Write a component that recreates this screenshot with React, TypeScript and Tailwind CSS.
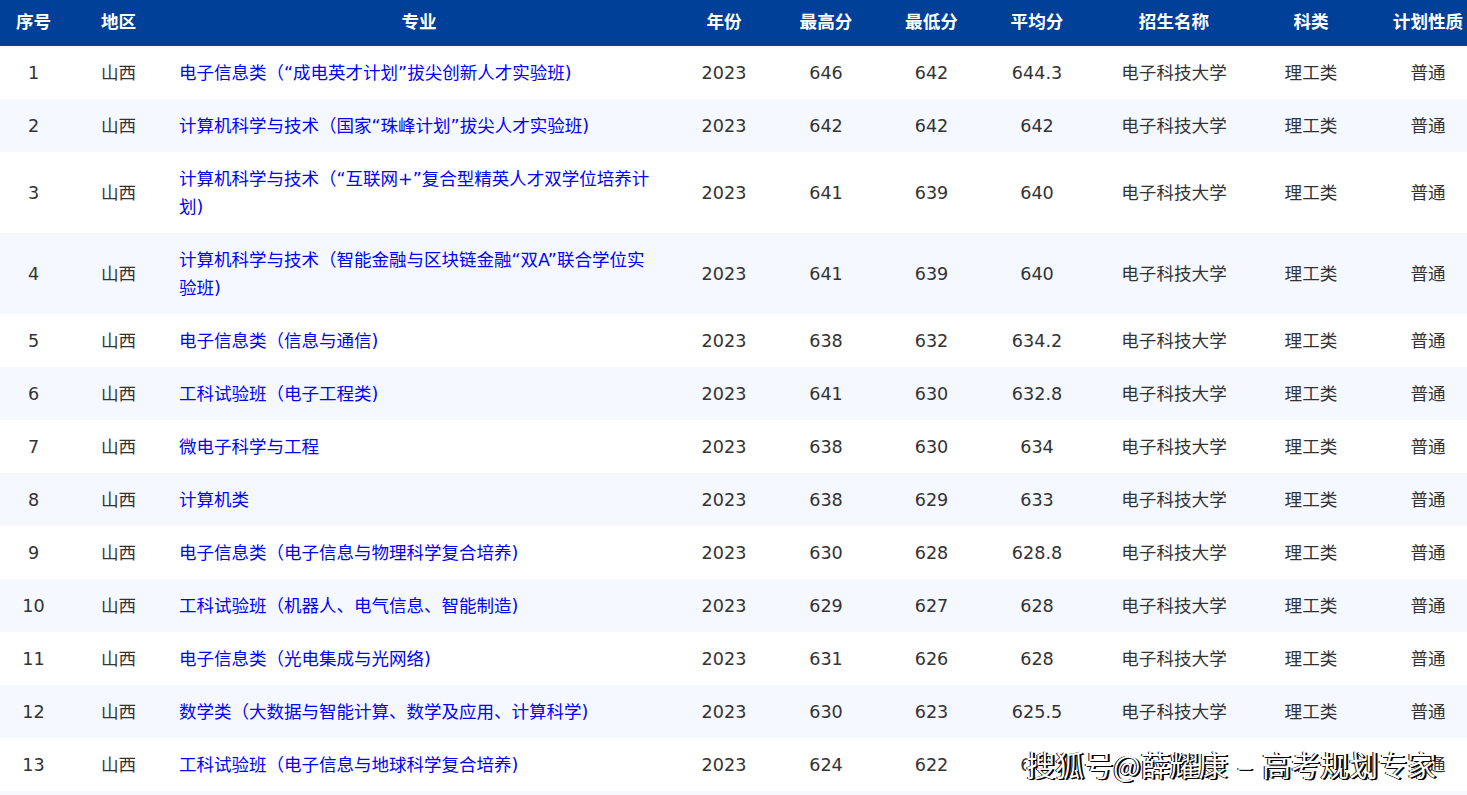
const rows = [
  ["1", "电子信息类（“成电英才计划”拔尖创新人才实验班)", "646", "642", "644.3"],
  ["2", "计算机科学与技术（国家“珠峰计划”拔尖人才实验班)", "642", "642", "642"],
  ["3", "计算机科学与技术（“互联网+”复合型精英人才双学位培养计划)", "641", "639", "640"],
  ["4", "计算机科学与技术（智能金融与区块链金融“双A”联合学位实验班)", "641", "639", "640"],
  ["5", "电子信息类（信息与通信)", "638", "632", "634.2"],
  ["6", "工科试验班（电子工程类)", "641", "630", "632.8"],
  ["7", "微电子科学与工程", "638", "630", "634"],
  ["8", "计算机类", "638", "629", "633"],
  ["9", "电子信息类（电子信息与物理科学复合培养)", "630", "628", "628.8"],
  ["10", "工科试验班（机器人、电气信息、智能制造)", "629", "627", "628"],
  ["11", "电子信息类（光电集成与光网络)", "631", "626", "628"],
  ["12", "数学类（大数据与智能计算、数学及应用、计算科学)", "630", "623", "625.5"],
  ["13", "工科试验班（电子信息与地球科学复合培养)", "624", "622", "623"],
];

const headers = ["序号", "地区", "专业", "年份", "最高分", "最低分", "平均分", "招生名称", "科类", "计划性质"];
const font = "font-['DejaVu_Sans','Noto_Sans_CJK_SC',sans-serif]";

export default function App() {
  return (
    <div className="relative h-screen overflow-hidden bg-white">
      <table className={`w-[1499px] table-fixed border-collapse text-center text-[17.6px] leading-[28px] text-[#333333] ${font}`}>
        <colgroup>
          <col className="w-[67px]" />
          <col className="w-[103px]" />
          <col className="w-[498px]" />
          <col className="w-[112px]" />
          <col className="w-[92px]" />
          <col className="w-[119px]" />
          <col className="w-[92px]" />
          <col className="w-[182px]" />
          <col className="w-[92px]" />
          <col className="w-[142px]" />
        </colgroup>
        <thead>
          <tr className="h-[46px] bg-[#004098] font-bold text-white">
            {headers.map((h) => (
              <th key={h} className="whitespace-nowrap pb-[3px] font-bold">{h}</th>
            ))}
          </tr>
        </thead>
        <tbody>
          {rows.map((r, i) => (
            <tr key={r[0]} className={i % 2 === 1 ? "bg-[#f5f8ff]" : "bg-white"}>
              <td>{r[0]}</td>
              <td>山西</td>
              <td className="py-[12.5px] pl-[9px] pr-[10px] text-left text-[17.5px] text-[#0000ff]">{r[1]}</td>
              <td>2023</td>
              <td>{r[2]}</td>
              <td>{r[3]}</td>
              <td>{r[4]}</td>
              <td>电子科技大学</td>
              <td>理工类</td>
              <td>普通</td>
            </tr>
          ))}
          <tr className="h-[53px] bg-[#f5f8ff]">
            <td colSpan={10} />
          </tr>
        </tbody>
      </table>
      <div className="absolute left-[1026px] top-[747px] w-[404px] whitespace-nowrap bg-white font-['Noto_Sans_CJK_SC',sans-serif] text-[29px] leading-[34px] text-white [word-spacing:3px] [text-shadow:1px_1px_0_#000,-1px_0_0_#000,2px_1px_0_#000]">
        搜狐号@薛耀康 – 高考规划专家
      </div>
    </div>
  );
}
